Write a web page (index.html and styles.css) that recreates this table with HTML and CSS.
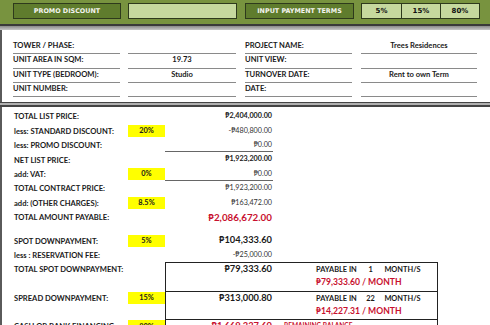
FILE: index.html
```html
<!DOCTYPE html>
<html>
<head>
<meta charset="utf-8">
<link rel="stylesheet" href="styles.css">
</head>
<body>
<div class="topbar">
  <div class="btn dark w-promo">PROMO DISCOUNT</div>
  <div class="btn light w-input"></div>
  <div class="btn dark w-terms">INPUT PAYMENT TERMS</div>
  <div class="terms">
    <div class="btn light term">5%</div>
    <div class="btn light term">15%</div>
    <div class="btn light term">80%</div>
  </div>
</div>
<div class="shade"></div>
<div class="sheet">
  <div class="info">
    <div class="cell lbl">TOWER / PHASE:</div><div class="cell val"></div><div class="cell lbl">PROJECT NAME:</div><div class="cell val">Trees Residences</div>
    <div class="cell lbl">UNIT AREA IN SQM:</div><div class="cell val">19.73</div><div class="cell lbl">UNIT VIEW:</div><div class="cell val"></div>
    <div class="cell lbl">UNIT TYPE (BEDROOM):</div><div class="cell val">Studio</div><div class="cell lbl">TURNOVER DATE:</div><div class="cell val">Rent to own Term</div>
    <div class="cell lbl">UNIT NUMBER:</div><div class="cell val"></div><div class="cell lbl">DATE:</div><div class="cell val"></div>
  </div>
  <div class="sep"></div>
  <div class="prices">
    <div class="row"><div class="plbl">TOTAL LIST PRICE:</div><div class="pct"></div><div class="amt bold">₱2,404,000.00</div></div>
    <div class="row"><div class="plbl">less: STANDARD DISCOUNT:</div><div class="pct yel">20%</div><div class="amt">-₱480,800.00</div></div>
    <div class="row"><div class="plbl">less: PROMO DISCOUNT:</div><div class="pct"></div><div class="amt line">₱0.00</div></div>
    <div class="row"><div class="plbl">NET LIST PRICE:</div><div class="pct"></div><div class="amt bold">₱1,923,200.00</div></div>
    <div class="row"><div class="plbl">add: VAT:</div><div class="pct yel">0%</div><div class="amt line">₱0.00</div></div>
    <div class="row"><div class="plbl">TOTAL CONTRACT PRICE:</div><div class="pct"></div><div class="amt">₱1,923,200.00</div></div>
    <div class="row"><div class="plbl">add: (OTHER CHARGES):</div><div class="pct yel">8.5%</div><div class="amt">₱163,472.00</div></div>
    <div class="row"><div class="plbl">TOTAL AMOUNT PAYABLE:</div><div class="pct"></div><div class="amt big red">₱2,086,672.00</div></div>
  </div>
  <div class="down">
    <div class="row"><div class="plbl">SPOT DOWNPAYMENT:</div><div class="pct yel">5%</div><div class="amt mid">₱104,333.60</div></div>
    <div class="row"><div class="plbl">less : RESERVATION FEE:</div><div class="pct"></div><div class="amt">-₱25,000.00</div></div>
    <div class="brow">
      <div class="plbl">TOTAL SPOT DOWNPAYMENT:</div><div class="pct"></div>
      <div class="box">
        <div class="bamt">₱79,333.60</div>
        <div class="pay">
          <div class="payline">PAYABLE IN <span class="num">1</span> MONTH/S</div>
          <div class="permonth">₱79,333.60 / MONTH</div>
        </div>
      </div>
    </div>
    <div class="brow">
      <div class="plbl">SPREAD DOWNPAYMENT:</div><div class="pct yel">15%</div>
      <div class="box">
        <div class="bamt">₱313,000.80</div>
        <div class="pay">
          <div class="payline">PAYABLE IN <span class="num">22</span> MONTH/S</div>
          <div class="permonth">₱14,227.31 / MONTH</div>
        </div>
      </div>
    </div>
    <div class="brow">
      <div class="plbl">CASH OR BANK FINANCING:</div><div class="pct yel">80%</div>
      <div class="box">
        <div class="bamt red">₱1,669,337.60</div>
        <div class="pay">
          <div class="remain">REMAINING BALANCE</div>
        </div>
      </div>
    </div>
  </div>
</div>
</body>
</html>
```
FILE: styles.css
```css
* { box-sizing: border-box; }
html, body { margin: 0; padding: 0; background: #fff; }
body {
  width: 490px;
  height: 325px;
  overflow: hidden;
  font-family: Lato, "Open Sans", sans-serif;
  color: #1a1a1a;
}
.topbar {
  height: 24px;
  background: #78933f;
  display: flex;
  align-items: flex-start;
  padding: 3px 0 0 13px;
}
.btn {
  height: 16px;
  border: 1px solid #2e3a1c;
  display: flex;
  align-items: center;
  justify-content: center;
  font-family: "DejaVu Sans", Verdana, sans-serif;
  font-weight: bold;
  font-size: 6.4px;
}
.dark { background: #5f7c2d; color: #f4f4f0; }
.light { background: #c6d99e; color: #111; }
.w-promo { width: 108px; }
.w-input { width: 109px; margin-left: 7px; }
.w-terms { width: 109px; margin-left: 8px; }
.terms { display: flex; margin-left: 7px; border: 1px solid #2e3a1c; }
.term { width: 39px; border: none; border-left: 1px solid #2e3a1c; height: 14px; font-size: 7px; }
.term:first-child { border-left: none; }
.shade {
  height: 6px;
  border-top: 2px solid #3a3a3a;
  background: linear-gradient(#8a8a8a, #c8c8c8);
}
.sheet {
  border-left: 2px solid #5a5a5a;
  height: 295px;
}
.info {
  display: grid;
  grid-template-columns: 107px 108px 108px 117px;
  column-gap: 8px;
  padding: 10px 0 5px 11px;
}
.info .cell:nth-child(4n+3) { margin-left: 1px; }
.info .cell:nth-child(4n+4) { margin-left: 1px; }
.cell {
  height: 14.3px;
  border-bottom: 1px solid #8a8a8a;
  font-size: 7.6px;
  font-weight: bold;
  line-height: 11px;
  white-space: nowrap;
}
.val { text-align: center; font-size: 7.6px; }
.sep {
  height: 5px;
  margin-left: -2px;
  background: linear-gradient(#444 0, #444 1px, #b0b0b0 1px, #b0b0b0 3px, #444 3px, #444 5px);
}
.prices { padding: 2px 0 0 12px; }
.row {
  display: grid;
  grid-template-columns: 114px 37px 108px;
  height: 14.4px;
  align-items: center;
}
.plbl {
  font-size: 7.6px;
  font-weight: bold;
  white-space: nowrap;
}
.pct {
  height: 12px;
  font-size: 7.4px;
  font-weight: bold;
  display: flex;
  align-items: center;
  justify-content: center;
}
.yel { background: #ffff00; }
.amt {
  text-align: right;
  font-size: 7.2px;
  color: #333;
  white-space: nowrap;
  height: 14.4px;
  line-height: 14px;
  padding-right: 1px;
}
.amt.bold { font-weight: bold; color: #1a1a1a; }
.amt.line { border-bottom: 1px solid #666; }
.amt.big { font-size: 9.8px; font-weight: bold; line-height: 14px; }
.amt.mid { font-size: 9.3px; font-weight: bold; color: #1a1a1a; }
.red { color: #c8102e !important; }
.down { padding: 9px 0 0 12px; }
.brow {
  display: grid;
  grid-template-columns: 114px 37px 273px;
  height: 28.6px;
  align-items: start;
}
.brow .plbl { line-height: 13px; margin-top: 1px; }
.brow .pct { margin-top: 1px; }
.box {
  height: 28.6px;
  border: 1px solid #222;
  border-bottom: none;
  display: flex;
}
.bamt {
  width: 107px;
  text-align: right;
  font-size: 9.3px;
  font-weight: bold;
  line-height: 12px;
  padding-right: 1px;
  white-space: nowrap;
}
.pay { margin-left: 43px; padding-top: 0; }
.payline {
  font-size: 7.4px;
  font-weight: bold;
  line-height: 13px;
  white-space: nowrap;
}
.num { display: inline-block; width: 24px; text-align: center; }
.permonth {
  font-size: 8.6px;
  font-weight: bold;
  color: #c8102e;
  line-height: 13px;
  white-space: nowrap;
}
.remain {
  font-size: 6.5px;
  font-weight: bold;
  color: #c8102e;
  line-height: 12px;
  margin-left: -32px;
}
```
